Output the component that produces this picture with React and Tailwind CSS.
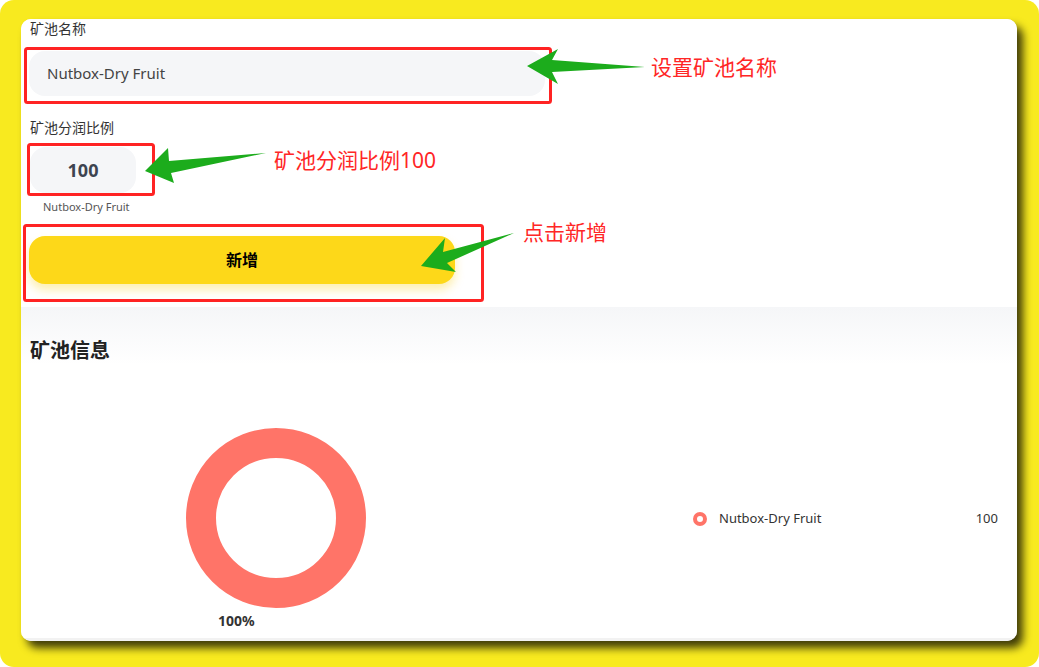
import React from 'react'

const font = { fontFamily: '"Noto Sans", "Noto Sans CJK SC", sans-serif' }

function Annotations() {
  return (
    <>
      <svg className="absolute inset-0 pointer-events-none" width="996" height="622">
        {/* red boxes */}
        <rect x="4.5" y="29.5" width="525" height="54" rx="2" fill="none" stroke="#ff2323" strokeWidth="3" />
        <rect x="7.5" y="125.5" width="125" height="50" rx="2" fill="none" stroke="#ff2323" strokeWidth="3" />
        <rect x="3.5" y="206.5" width="458" height="75" rx="2" fill="none" stroke="#ff2323" strokeWidth="3" />
        {/* green arrows */}
        <polygon points="506,47 537,30 531,41 624,48 531,53 537,65" fill="#1cac1c" />
        <polygon points="124,152 147,129 148,142 245,134 150,154 153,164" fill="#1cac1c" />
        <polygon points="400,247 424,219 422,233 493,214 426,244 435,253" fill="#1cac1c" />
      </svg>
      <div className="absolute left-[630px] top-[34px] text-[21px] leading-[28px] text-[#ff2626] whitespace-nowrap">设置矿池名称</div>
      <div className="absolute left-[253px] top-[127px] text-[21px] leading-[28px] text-[#ff2626] whitespace-nowrap">矿池分润比例100</div>
      <div className="absolute left-[502px] top-[199px] text-[21px] leading-[28px] text-[#ff2626] whitespace-nowrap">点击新增</div>
    </>
  )
}

function Donut() {
  return (
    <svg width="180" height="180" viewBox="0 0 180 180">
      <circle cx="90" cy="90" r="75" fill="none" stroke="#ff7468" strokeWidth="30" />
    </svg>
  )
}

export default function App() {
  return (
    <div className="w-[1039px] h-[667px] bg-white" style={font}>
      <div className="w-full h-full bg-[#f8ea1f] rounded-[14px] pl-[21px] pt-[19px]">
        <div className="relative w-[996px] h-[622px] bg-[#f3f3f3] rounded-[10px] overflow-hidden shadow-[6px_7px_9px_rgba(0,0,0,0.75)] flex flex-col">
          {/* form */}
          <div className="bg-white pl-[8px] pb-[23px]">
            <div className="pt-[2px] pl-[1px] text-[14px] leading-[16px] text-[#333]">矿池名称</div>
            <div className="mt-[14px] w-[516px] h-[45px] bg-[#f5f6f8] rounded-[16px] flex items-center pl-[18px] text-[15px] text-[#444]">
              Nutbox-Dry Fruit
            </div>
            <div className="mt-[24px] pl-[1px] text-[14px] leading-[16px] text-[#333]">矿池分润比例</div>
            <div className="mt-[11px] ml-[1px] w-[106px] h-[46px] bg-[#f5f6f8] rounded-[16px] flex items-center justify-center pt-[1px] text-[18px] font-bold text-[#3d4450]">
              100
            </div>
            <div className="mt-[7px] ml-[14px] text-[11px] leading-[14px] text-[#555]">Nutbox-Dry Fruit</div>
            <button className="mt-[22px] w-[426px] h-[48px] bg-[#fdd819] rounded-[16px] shadow-[0_6px_10px_rgba(250,210,30,0.35)] text-[16px] font-bold text-black">
              新增
            </button>
          </div>

          {/* pool info */}
          <div className="flex-1 bg-white flex flex-col">
            <div className="bg-gradient-to-b from-[#f5f6f8] to-white pt-[30px] pl-[9px] h-[58px]">
              <h2 className="text-[20px] leading-[28px] font-bold text-[#222]">矿池信息</h2>
            </div>
            <div className="grid grid-cols-2 flex-1">
              <div className="flex flex-col pt-[63px]">
                <div className="ml-[165px]">
                  <Donut />
                </div>
                <div className="mt-[4px] ml-[197px] text-[14px] leading-[18px] font-bold text-[#333]">100%</div>
              </div>
              <div className="pt-[146px] pl-[174px] pr-[19px]">
                <div className="flex items-center h-[16px] text-[13px] text-[#333]">
                  <span className="w-[14px] h-[14px] rounded-full border-[4px] border-[#ff7468]" />
                  <span className="ml-[12px]">Nutbox-Dry Fruit</span>
                  <span className="ml-auto">100</span>
                </div>
              </div>
            </div>
          </div>
          <div className="h-[3px] bg-[#f2f2f2]" />

          <Annotations />
        </div>
      </div>
    </div>
  )
}
